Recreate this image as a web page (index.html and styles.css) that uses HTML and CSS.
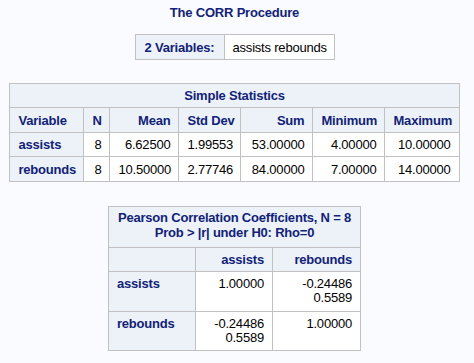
FILE: index.html
```html
<!DOCTYPE html>
<html>
<head>
<meta charset="utf-8">
<link rel="stylesheet" href="styles.css">
</head>
<body>
<div class="page">
  <div class="proc-title">The CORR Procedure</div>

  <table class="sas vars">
    <tr>
      <th class="rowh">2 Variables:</th>
      <td class="left">assists rebounds</td>
    </tr>
  </table>

  <table class="sas stats">
    <colgroup>
      <col class="c-var"><col class="c-n"><col class="c-mean"><col class="c-std"><col class="c-sum"><col class="c-min"><col class="c-max">
    </colgroup>
    <thead>
      <tr class="r-title"><th colspan="7" class="center">Simple Statistics</th></tr>
      <tr class="r-head">
        <th class="left">Variable</th>
        <th>N</th>
        <th>Mean</th>
        <th>Std Dev</th>
        <th>Sum</th>
        <th>Minimum</th>
        <th>Maximum</th>
      </tr>
    </thead>
    <tbody>
      <tr class="r-a">
        <th class="rowh">assists</th>
        <td>8</td><td>6.62500</td><td>1.99553</td><td>53.00000</td><td>4.00000</td><td>10.00000</td>
      </tr>
      <tr class="r-b">
        <th class="rowh">rebounds</th>
        <td>8</td><td>10.50000</td><td>2.77746</td><td>84.00000</td><td>7.00000</td><td>14.00000</td>
      </tr>
    </tbody>
  </table>

  <table class="sas corr">
    <colgroup>
      <col class="c-rv"><col class="c-a"><col class="c-b">
    </colgroup>
    <thead>
      <tr class="r-ctitle"><th colspan="3" class="center">Pearson Correlation Coefficients, N = 8<br>Prob &gt; |r| under H0: Rho=0</th></tr>
      <tr class="r-chead"><th></th><th>assists</th><th>rebounds</th></tr>
    </thead>
    <tbody>
      <tr class="r-c1">
        <th class="rowh top">assists</th>
        <td class="top">1.00000</td>
        <td class="top">-0.24486<br>0.5589</td>
      </tr>
      <tr class="r-c2">
        <th class="rowh top">rebounds</th>
        <td class="top">-0.24486<br>0.5589</td>
        <td class="top">1.00000</td>
      </tr>
    </tbody>
  </table>
</div>
</body>
</html>
```

FILE: styles.css
```css
html, body {
  margin: 0;
  padding: 0;
  background: #fafbfe;
}

body {
  font-family: "Liberation Sans", Arial, sans-serif;
  font-size: 13px;
  letter-spacing: -0.2px;
  color: #000;
}

.page {
  width: 469px;
  display: flex;
  flex-direction: column;
  align-items: center;
  padding-top: 5px;
}

.proc-title {
  font-weight: bold;
  color: #112277;
  line-height: 16px;
  height: 16px;
}

.sas {
  border-collapse: collapse;
  border: 1px solid #c1c1c1;
  table-layout: fixed;
}

.sas th,
.sas td {
  border: 1px solid #c1c1c1;
  padding: 0 8px;
  line-height: 15px;
  text-align: right;
  vertical-align: middle;
  white-space: nowrap;
}

.sas th {
  background: #edf2f9;
  color: #112277;
  font-weight: bold;
}

.sas td {
  background: #ffffff;
}

.sas .left,
.sas .rowh {
  text-align: left;
}

.sas .center {
  text-align: center;
}

.sas .top {
  vertical-align: top;
  padding-top: 5px;
  line-height: 14px;
}

.vars {
  margin-top: 13px;
  width: 200px;
}
.vars tr { height: 25px; }
.vars th { width: 71px; padding-left: 9px; }
.vars td { padding-left: 8px; }

.stats {
  margin-top: 23px;
  width: 450px;
}
.c-var { width: 74px; }
.c-n { width: 26px; }
.c-mean { width: 69px; }
.c-std { width: 62px; }
.c-sum { width: 72px; }
.c-min { width: 72px; }
.c-max { width: 74px; }

.stats .r-title { height: 24px; }
.stats .r-head { height: 25px; }
.stats .r-a { height: 24px; }
.stats .r-b { height: 25px; }

.corr {
  margin-top: 24px;
  width: 253px;
}
.c-rv { width: 87px; }
.c-a { width: 77px; }
.c-b { width: 88px; }

.corr .r-ctitle { height: 41px; }
.corr .r-ctitle th { vertical-align: top; padding-top: 3px; line-height: 15px; }
.corr .r-chead { height: 24px; }
.corr .r-c1 { height: 40px; }
.corr .r-c2 { height: 39px; }
```
